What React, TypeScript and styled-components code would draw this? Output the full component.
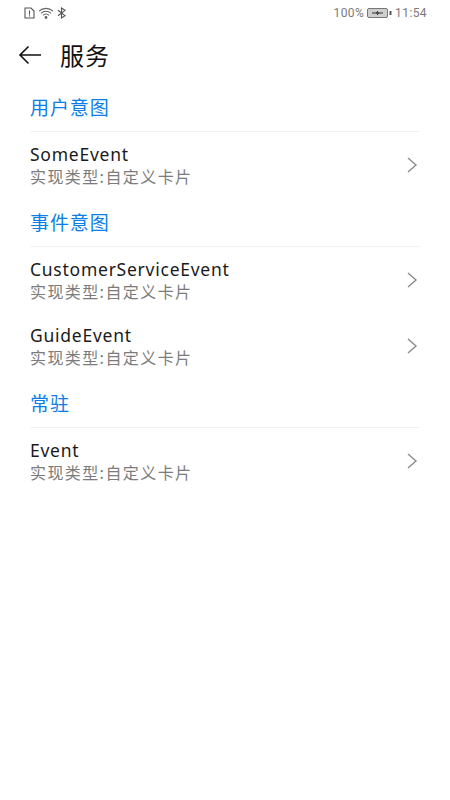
import React from "react";
import styled, { createGlobalStyle } from "styled-components";

const Global = createGlobalStyle`
  html, body { margin: 0; padding: 0; background: #fff; }
  body { font-family: "Noto Sans", "Noto Sans CJK SC", sans-serif; }
`;

const Page = styled.div`
  width: 450px;
  height: 800px;
  background: #fff;
  overflow: hidden;
`;

const StatusBar = styled.div`
  height: 26px;
  display: flex;
  align-items: center;
  justify-content: space-between;
  padding: 0 23px 0 24px;
  color: #7a7a7a;
  font-family: "Roboto", sans-serif;
  font-size: 12px;
  letter-spacing: 0.4px;
`;

const StatusGroup = styled.div`
  display: flex;
  align-items: center;
  gap: 3px;
`;

const AppBar = styled.div`
  height: 57px;
  display: flex;
  align-items: center;
  padding: 0 18px;
  gap: 18px;
`;

const Title = styled.h1`
  margin: 0;
  font-size: 24px;
  line-height: 30px;
  font-weight: 400;
  letter-spacing: 1px;
  color: #111;
  font-family: "Noto Sans CJK SC", sans-serif;
`;

const Content = styled.div`
  padding: 0 30px;
`;

const SectionTitle = styled.div`
  height: 49px;
  display: flex;
  align-items: center;
  padding-bottom: 2px;
  font-size: 19px;
  color: #0a7ee6;
  font-family: "Noto Sans CJK SC", sans-serif;
  letter-spacing: 0.9px;
  border-bottom: 1px solid #f3f3f3;
  box-sizing: border-box;
`;

const Row = styled.div`
  height: 66px;
  display: flex;
  align-items: center;
  justify-content: space-between;
`;

const RowText = styled.div`
  display: flex;
  flex-direction: column;
`;

const RowTitle = styled.div`
  font-size: 17.5px;
  line-height: 23px;
  color: #1a1a1a;
  letter-spacing: 0.75px;
`;

const RowSub = styled.div`
  font-size: 16px;
  line-height: 23px;
  margin-top: -1px;
  color: #7c7c7c;
  font-family: "Noto Sans CJK SC", sans-serif;
  letter-spacing: 1.4px;
`;

const Chevron = styled.svg`
  width: 12px;
  height: 18px;
  margin-right: 2px;
  fill: none;
  stroke: #8b8b8b;
  stroke-width: 1.4;
`;

const items = [
  { section: "用户意图", rows: ["SomeEvent"] },
  { section: "事件意图", rows: ["CustomerServiceEvent", "GuideEvent"] },
  { section: "常驻", rows: ["Event"] },
];

export default function App() {
  return (
    <Page>
      <Global />
      <StatusBar>
        <StatusGroup>
          <svg width="11" height="12" viewBox="0 0 11 12" fill="none" stroke="#555" strokeWidth="1.1">
            <path d="M1 1h6l3 3v7H1z" />
            <path d="M5.5 3.5v4M5.5 8.3v1.3" />
          </svg>
          <svg width="16" height="12" viewBox="0 0 16 12" fill="none" stroke="#666" strokeWidth="1.1">
            <path d="M1 4.2a10 10 0 0 1 14 0M3 6.4a7 7 0 0 1 10 0M5 8.4a4 4 0 0 1 6 0" />
            <circle cx="8" cy="10.5" r="0.9" fill="#666" />
          </svg>
          <svg width="9" height="12" viewBox="0 0 9 12" fill="none" stroke="#555" strokeWidth="1.1">
            <path d="M1 3.2l7 5.4L4.5 11V1L8 3.4 1 8.8" />
          </svg>
        </StatusGroup>
        <StatusGroup>
          <span>100%</span>
          <svg width="25" height="10" viewBox="0 0 25 10">
            <rect x="0.5" y="0.5" width="20" height="9" rx="1.5" fill="#cfcfcf" stroke="#777" />
            <rect x="22.5" y="3" width="2" height="4" fill="#555" />
            <path d="M5 5h11M11 3l-2 2h3l-2 2" stroke="#333" strokeWidth="1" fill="none" />
          </svg>
          <span>11:54</span>
        </StatusGroup>
      </StatusBar>
      <AppBar>
        <svg width="24" height="20" viewBox="0 0 24 20" fill="none" stroke="#111" strokeWidth="1.6">
          <path d="M23 10H2M10.5 1.5 2 10l8.5 8.5" />
        </svg>
        <Title>服务</Title>
      </AppBar>
      <Content>
        {items.map((g) => (
          <div key={g.section}>
            <SectionTitle>{g.section}</SectionTitle>
            {g.rows.map((r) => (
              <Row key={r}>
                <RowText>
                  <RowTitle>{r}</RowTitle>
                  <RowSub>实现类型:自定义卡片</RowSub>
                </RowText>
                <Chevron viewBox="0 0 12 18">
                  <path d="M2 2l8 7-8 7" />
                </Chevron>
              </Row>
            ))}
          </div>
        ))}
      </Content>
    </Page>
  );
}
